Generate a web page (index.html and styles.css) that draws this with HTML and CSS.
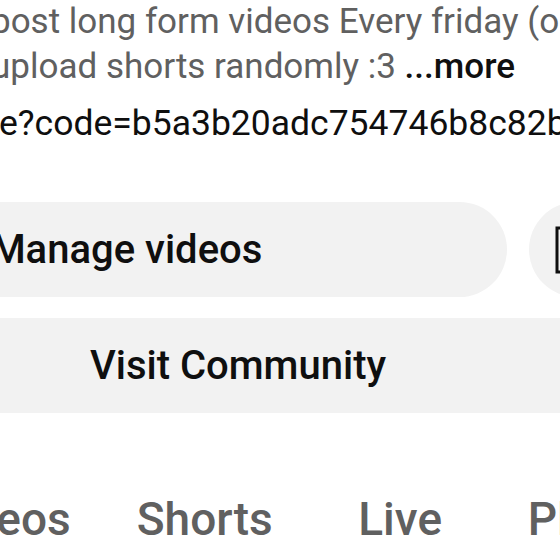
FILE: index.html
```html
<!DOCTYPE html>
<html lang="en">
<head>
    <meta charset="UTF-8">
    <meta name="viewport" content="width=device-width, initial-scale=1.0">
    <title>Channel</title>
    <link rel="stylesheet" href="styles.css">
</head>
<body>

<main class="channel">
    <div class="description">
        <p class="desc-line">post long form videos Every friday (or whenever)</p>
        <p class="desc-line">upload shorts randomly :3 <span class="more">...more</span></p>
    </div>

    <p class="link">e?code=b5a3b20adc754746b8c82b0e</p>

    <div class="actions">
        <button class="pill">Manage videos</button>
        <button class="round" aria-label="Analytics">
            <svg width="48" height="48" viewBox="0 0 48 48">
                <rect x="4" y="2" width="40" height="44" fill="none" stroke="#0f0f0f" stroke-width="3"/>
                <path d="M16 36V24M24 36V14M32 36V28" stroke="#0f0f0f" stroke-width="3"/>
            </svg>
        </button>
    </div>

    <button class="community">Visit Community</button>

    <nav class="tabs">
        <span class="tab">Videos</span>
        <span class="tab">Shorts</span>
        <span class="tab">Live</span>
        <span class="tab">Playlists</span>
    </nav>
</main>

</body>
</html>
```

FILE: styles.css
```css
body {
    margin: 0;
    background: #fff;
    font-family: Roboto, "Noto Sans", sans-serif;
}

.channel {
    width: 560px;
    height: 560px;
    overflow: hidden;
}

.description {
    margin: -1px 0 0 -9px;
    color: #606060;
    font-size: 35px;
    line-height: 45px;
}

.desc-line {
    margin: 0;
    white-space: nowrap;
}

.more {
    color: #0f0f0f;
    font-weight: 500;
}

.link {
    margin: 12px 0 0 -1px;
    color: #0f0f0f;
    font-size: 35.5px;
    line-height: 45px;
    white-space: nowrap;
}

.actions {
    display: flex;
    gap: 22px;
    margin: 56px 0 0 -254px;
}

.pill,
.round,
.community {
    border: none;
    background-color: #f2f2f2;
    color: #0f0f0f;
    font-family: inherit;
    font-weight: 500;
    font-size: 40px;
    padding: 0;
    flex-shrink: 0;
}

.pill {
    width: 761px;
    height: 95px;
    border-radius: 48px;
}

.round {
    width: 95px;
    height: 95px;
    border-radius: 50%;
    display: flex;
    align-items: center;
    justify-content: center;
}

.community {
    display: block;
    width: 980px;
    height: 95px;
    margin: 21px 0 0 -252px;
    border-radius: 20px;
}

.tabs {
    display: flex;
    margin: 76px 0 0 -104px;
    color: #606060;
    font-size: 46px;
    font-weight: 500;
    line-height: 60px;
    white-space: nowrap;
}

.tab {
    flex-shrink: 0;
    min-width: 123px;
    padding: 0 33px;
    text-align: center;
}
```
